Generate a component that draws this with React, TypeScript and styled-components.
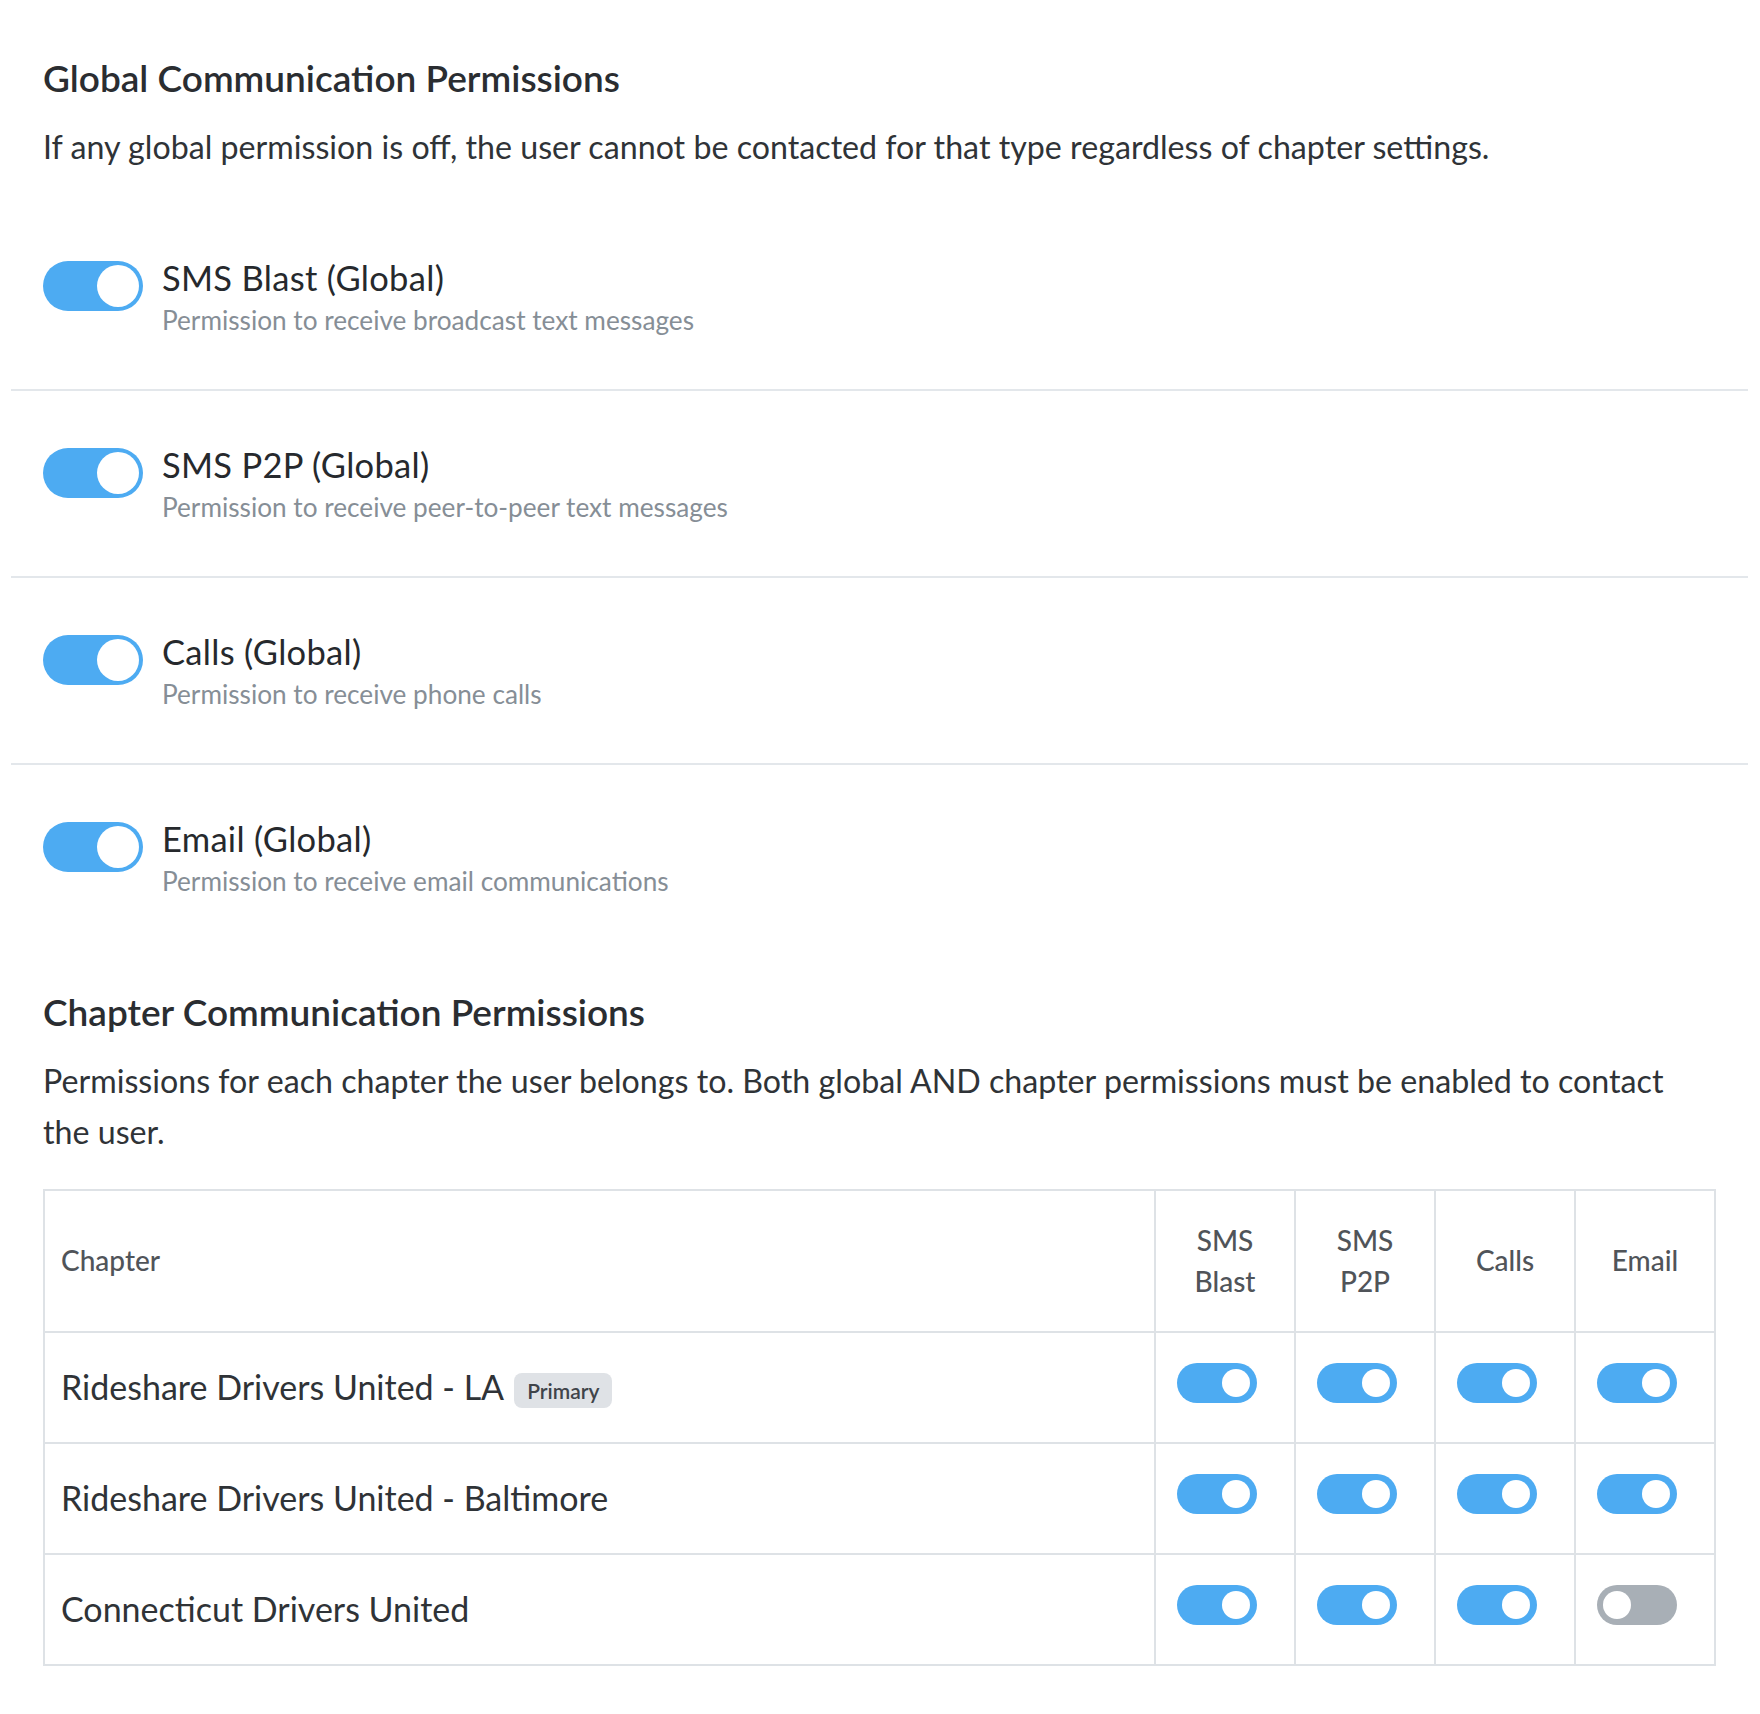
import { useState } from "react";
import styled, { createGlobalStyle } from "styled-components";

const GlobalStyle = createGlobalStyle`
  body {
    margin: 0;
    background: #ffffff;
    font-family: Lato, "Open Sans", sans-serif;
    color: #2b2f33;
  }
`;

const Page = styled.div`
  padding: 56px 12px 48px 11px;
`;

const Section = styled.section<{ $spaced?: boolean }>`
  padding: 0 32px;
  margin-top: ${props => (props.$spaced ? "40px" : "0")};
`;

const SectionTitle = styled.h2`
  margin: 0 0 22px;
  font-size: 37px;
  font-weight: 600;
  line-height: 43px;
  color: #2a2d31;
`;

const SectionText = styled.p`
  max-width: 1670px;
  margin: 0 0 31px;
  font-size: 32.2px;
  line-height: 1.6;
  color: #2f3337;
`;

const PermissionList = styled.div`
  display: flex;
  flex-direction: column;
`;

const PermissionRow = styled.div`
  display: flex;
  align-items: flex-start;
  gap: 19px;
  margin: 0 -32px;
  padding: 50px 32px 51px;
  border-bottom: 2px solid #e3e7eb;

  &:last-child {
    border-bottom: none;
  }
`;

const PermissionText = styled.div`
  display: flex;
  flex-direction: column;
`;

const PermissionTitle = styled.div`
  font-size: 34.5px;
  line-height: 48px;
  letter-spacing: 0.3px;
  color: #26292d;
`;

const PermissionHint = styled.div`
  font-size: 26.2px;
  line-height: 36px;
  color: #868e96;
`;

const Switch = styled.button<{ $on: boolean; $size: "lg" | "sm" }>`
  position: relative;
  display: block;
  flex-shrink: 0;
  width: ${props => (props.$size === "lg" ? 100 : 80)}px;
  height: ${props => (props.$size === "lg" ? 50 : 40)}px;
  margin: ${props => (props.$size === "lg" ? "7px 0 0" : "0 0 8px")};
  padding: 0;
  border: none;
  border-radius: 999px;
  background: ${props => (props.$on ? "#4dabf2" : "#a8afb6")};
  cursor: pointer;

  &::after {
    content: "";
    position: absolute;
    top: ${props => (props.$size === "lg" ? 4 : 6)}px;
    left: ${props =>
      props.$size === "lg" ? (props.$on ? 54 : 4) : props.$on ? 45 : 6}px;
    width: ${props => (props.$size === "lg" ? 42 : 28)}px;
    height: ${props => (props.$size === "lg" ? 42 : 28)}px;
    border-radius: 50%;
    background: #ffffff;
  }
`;

const Table = styled.table`
  width: 100%;
  table-layout: fixed;
  border-collapse: collapse;
  border: 2px solid #dee2e6;
`;

const HeadCell = styled.th<{ $align?: "left" | "center" }>`
  padding: 29px 16px;
  border: 2px solid #dee2e6;
  font-size: 28px;
  font-weight: 500;
  line-height: 41px;
  color: #505459;
  text-align: ${props => props.$align || "center"};
  vertical-align: middle;
`;

const Cell = styled.td`
  padding: 30px 16px 31px;
  border: 2px solid #dee2e6;
  font-size: 34px;
  line-height: 48px;
  color: #2f3337;
  vertical-align: middle;
`;

const SwitchCell = styled.td`
  padding: 0 18px 0 21px;
  border: 2px solid #dee2e6;
  vertical-align: middle;
`;

const Badge = styled.span`
  display: inline-block;
  margin-left: 10px;
  padding: 0 13px;
  height: 35px;
  line-height: 35px;
  border-radius: 8px;
  background: #dfe2e6;
  color: #3f444a;
  font-size: 21px;
  font-weight: 600;
  vertical-align: middle;
`;

const globalPermissions = [
  { key: "blast", title: "SMS Blast (Global)", hint: "Permission to receive broadcast text messages" },
  { key: "p2p", title: "SMS P2P (Global)", hint: "Permission to receive peer-to-peer text messages" },
  { key: "calls", title: "Calls (Global)", hint: "Permission to receive phone calls" },
  { key: "email", title: "Email (Global)", hint: "Permission to receive email communications" },
];

const columns = ["SMS Blast", "SMS P2P", "Calls", "Email"];

const initialChapters = [
  { name: "Rideshare Drivers United - LA", primary: true, perms: [true, true, true, true] },
  { name: "Rideshare Drivers United - Baltimore", primary: false, perms: [true, true, true, true] },
  { name: "Connecticut Drivers United", primary: false, perms: [true, true, true, false] },
];

const App = () => {
  const [globals, setGlobals] = useState<Record<string, boolean>>({
    blast: true,
    p2p: true,
    calls: true,
    email: true,
  });
  const [chapters, setChapters] = useState(initialChapters);

  const flipChapter = (row: number, col: number) => {
    setChapters(list =>
      list.map((c, i) =>
        i === row ? { ...c, perms: c.perms.map((p, j) => (j === col ? !p : p)) } : c
      )
    );
  };

  return (
    <Page>
      <GlobalStyle />

      <Section>
        <SectionTitle>Global Communication Permissions</SectionTitle>
        <SectionText>
          If any global permission is off, the user cannot be contacted for that type
          regardless of chapter settings.
        </SectionText>

        <PermissionList>
          {globalPermissions.map(item => (
            <PermissionRow key={item.key}>
              <Switch
                type="button"
                $size="lg"
                $on={globals[item.key]}
                onClick={() => setGlobals(g => ({ ...g, [item.key]: !g[item.key] }))}
              />
              <PermissionText>
                <PermissionTitle>{item.title}</PermissionTitle>
                <PermissionHint>{item.hint}</PermissionHint>
              </PermissionText>
            </PermissionRow>
          ))}
        </PermissionList>
      </Section>

      <Section $spaced>
        <SectionTitle>Chapter Communication Permissions</SectionTitle>
        <SectionText>
          Permissions for each chapter the user belongs to. Both global AND chapter
          permissions must be enabled to contact the user.
        </SectionText>

        <Table>
          <colgroup>
            <col />
            <col style={{ width: 140 }} />
            <col style={{ width: 140 }} />
            <col style={{ width: 140 }} />
            <col style={{ width: 140 }} />
          </colgroup>
          <thead>
            <tr>
              <HeadCell $align="left">Chapter</HeadCell>
              {columns.map(col => (
                <HeadCell key={col}>{col}</HeadCell>
              ))}
            </tr>
          </thead>
          <tbody>
            {chapters.map((chapter, row) => (
              <tr key={chapter.name}>
                <Cell>
                  {chapter.name}
                  {chapter.primary && <Badge>Primary</Badge>}
                </Cell>
                {chapter.perms.map((on, col) => (
                  <SwitchCell key={col}>
                    <Switch
                      type="button"
                      $size="sm"
                      $on={on}
                      onClick={() => flipChapter(row, col)}
                    />
                  </SwitchCell>
                ))}
              </tr>
            ))}
          </tbody>
        </Table>
      </Section>
    </Page>
  );
};

export default App;
